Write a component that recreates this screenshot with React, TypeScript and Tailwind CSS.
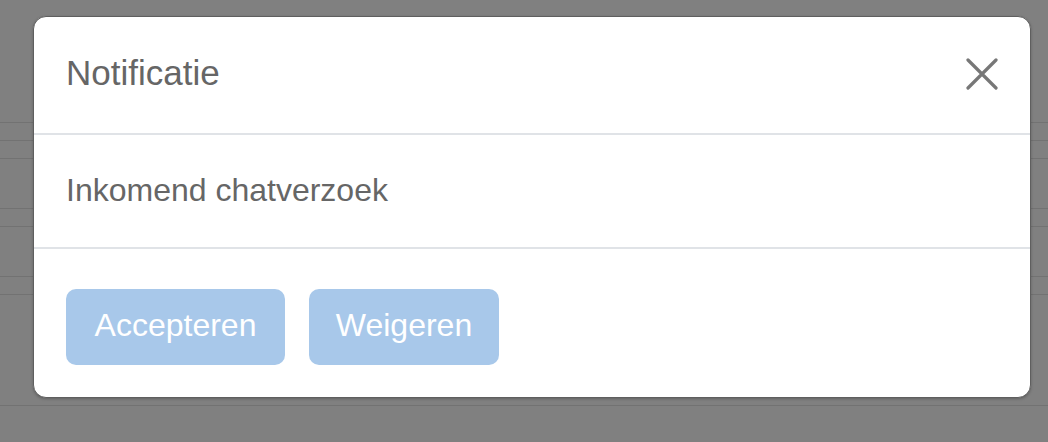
import React from 'react';

const rowHeights = ['h-[18px]', 'h-[18px]', 'h-[50px]', 'h-[18px]', 'h-[50px]', 'h-[18px]', 'h-[111px]'];

function CloseIcon() {
  return (
    <svg width="32" height="32" viewBox="0 0 32 32" fill="none">
      <path d="M2 2 L30 30 M30 2 L2 30" stroke="#777777" strokeWidth="3.2" strokeLinecap="round" />
    </svg>
  );
}

export default function App() {
  return (
    <div
      className="relative w-[1048px] h-[442px] overflow-hidden bg-[#808080]"
      style={{ fontFamily: '"Liberation Sans", Arial, sans-serif' }}
    >
      {/* page behind the backdrop */}
      <div className="pt-[122px]">
        {rowHeights.map((h, i) => (
          <div key={i} className={`${h} border-t border-[#727272]`} />
        ))}
        <div className="border-t border-[#727272]" />
      </div>

      {/* Modal */}
      <div className="absolute inset-0 pt-[16px] pl-[33px]">
        <div className="w-[998px] bg-white border border-[#5f5f5f] rounded-[13px] shadow-[0_1px_3px_rgba(0,0,0,0.25)]">
          <div className="h-[118px] flex items-center justify-between px-8 pb-[5px] border-b-2 border-[#e0e3e7]">
            <h5 className="text-[35px] leading-none text-[#666666]">Notificatie</h5>
            <button className="mt-[3px]">
              <CloseIcon />
            </button>
          </div>
          <div className="h-[114px] flex items-center px-8 pb-[3px] border-b-2 border-[#e0e3e7]">
            <p className="text-[32px] leading-none text-[#666666]">Inkomend chatverzoek</p>
          </div>
          <div className="flex gap-6 px-8 pt-[40px] pb-[32px]">
            <button className="h-[76px] w-[219px] pb-[4px] rounded-[10px] bg-[#a8c8ea] text-white text-[32px] leading-none">
              Accepteren
            </button>
            <button className="h-[76px] w-[190px] pb-[4px] rounded-[10px] bg-[#a8c8ea] text-white text-[32px] leading-none">
              Weigeren
            </button>
          </div>
        </div>
      </div>
    </div>
  );
}
